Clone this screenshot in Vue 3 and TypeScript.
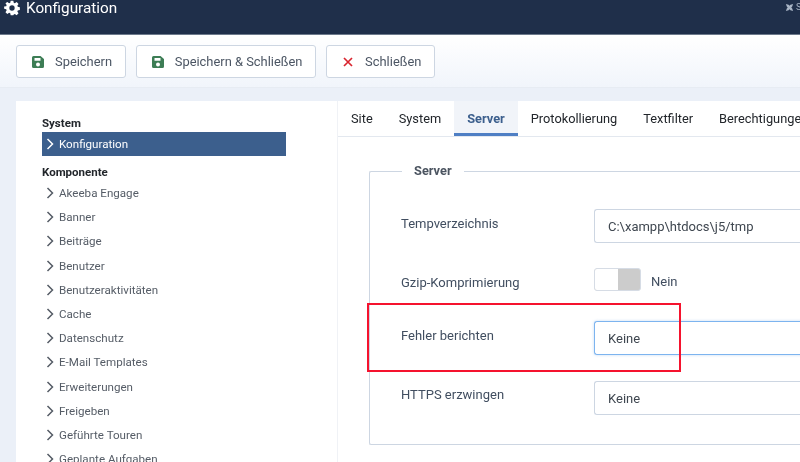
<script setup lang="ts">
const items: string[] = [
  'Akeeba Engage', 'Banner', 'Beiträge', 'Benutzer', 'Benutzeraktivitäten', 'Cache',
  'Datenschutz', 'E-Mail Templates', 'Erweiterungen', 'Freigeben', 'Geführte Touren', 'Geplante Aufgaben',
]
const tabs: string[] = ['Site', 'System', 'Server', 'Protokollierung', 'Textfilter', 'Berechtigungen']
</script>

<template>
  <div class="page">
    <header class="topbar">
      <svg class="gear" viewBox="0 0 24 24" width="16" height="16" aria-hidden="true">
        <path fill="#fff" fill-rule="evenodd" d="M10 1h4l.6 3.100 1.600.7L19 3l2.800 2.900-1.800 2.700.7 1.700 3.100.7v4l-3.100.6-.7 1.700 1.800 2.700-2.800 2.800-2.700-1.800-1.700.7L14 23h-4l-.6-3.100-1.700-.7L5 21l-2.800-2.800L4 15.500l-.7-1.700L.2 13.100v-3.200l3.100-.7L4 7.500 2.200 5 5 2.900l2.700 1.800 1.700-.7zM12 8a4 4 0 1 0 0 8 4 4 0 0 0 0-8z" />
      </svg>
      <span class="title">Konfiguration</span>
      <svg class="joomla" viewBox="0 0 10 10" width="9" height="9" aria-hidden="true">
        <path fill="#a9b5c6" d="M1 1l3 1 1 1 1-1 3-1-1 3-1 1 1 1 1 3-3-1-1-1-1 1-3 1 1-3 1-1-1-1z" />
      </svg>
      <span class="cut">S</span>
    </header>

    <div class="toolbar">
      <button class="btn">
        <svg class="ico" viewBox="0 0 12 12" aria-hidden="true">
          <path fill="#3d7d55" fill-rule="evenodd" d="M1.500 0h7L12 3v7.500A1.500 1.500 0 0 1 10.500 12h-9A1.500 1.500 0 0 1 0 10.500v-9A1.500 1.500 0 0 1 1.500 0zM2.500 2v2.800h6V2zM6 6.500a2 2 0 1 0 0 4 2 2 0 0 0 0-4z" />
        </svg>
        Speichern
      </button>
      <button class="btn">
        <svg class="ico" viewBox="0 0 12 12" aria-hidden="true">
          <path fill="#3d7d55" fill-rule="evenodd" d="M1.500 0h7L12 3v7.500A1.500 1.500 0 0 1 10.500 12h-9A1.500 1.500 0 0 1 0 10.500v-9A1.500 1.500 0 0 1 1.500 0zM2.500 2v2.800h6V2zM6 6.500a2 2 0 1 0 0 4 2 2 0 0 0 0-4z" />
        </svg>
        Speichern &amp; Schließen
      </button>
      <button class="btn">
        <svg class="ico" viewBox="0 0 12 12" aria-hidden="true">
          <path stroke="#d9252f" stroke-width="1.700" d="M2 2l8 8M10 2l-8 8" />
        </svg>
        Schließen
      </button>
    </div>

    <main class="content">
      <aside class="side">
        <h3 class="group first">System</h3>
        <a class="item active">
          <svg class="chev" viewBox="0 0 8 12" aria-hidden="true"><path d="M1.500 1l5 5-5 5" /></svg>
          Konfiguration
        </a>
        <h3 class="group second">Komponente</h3>
        <a v-for="i in items" :key="i" class="item">
          <svg class="chev" viewBox="0 0 8 12" aria-hidden="true"><path d="M1.500 1l5 5-5 5" /></svg>
          {{ i }}
        </a>
      </aside>

      <section class="panel">
        <nav class="tabs">
          <span v-for="t in tabs" :key="t" class="tab" :class="{ on: t === 'Server' }">{{ t }}</span>
        </nav>
        <div class="body">
          <fieldset class="fs">
            <legend>Server</legend>
            <div class="row r1">
              <label>Tempverzeichnis</label>
              <div class="input">C:\xampp\htdocs\j5/tmp</div>
            </div>
            <div class="row r2">
              <label>Gzip-Komprimierung</label>
              <div class="switch">
                <span class="track"><i></i></span>
                <span class="sw-label">Nein</span>
              </div>
            </div>
            <div class="row r3">
              <label>Fehler berichten</label>
              <div class="input focus">Keine</div>
            </div>
            <div class="row r4">
              <label>HTTPS erzwingen</label>
              <div class="input">Keine</div>
            </div>
          </fieldset>
        </div>
      </section>
    </main>

    <div class="mark"></div>
  </div>
</template>

<style>
html, body { margin: 0; background: #eef2f9; }
</style>

<style scoped>
.page {
  position: relative;
  width: 800px;
  height: 462px;
  overflow: hidden;
  background: #ebf0f8;
  font-family: Roboto, "Liberation Sans", sans-serif;
  color: #495057;
  filter: blur(0.35px);
}
.topbar {
  height: 34px;
  background: #1f2f4a;
  border-bottom: 1px solid #6d7a8c;
  display: flex;
  align-items: flex-start;
  color: #fff;
  padding-left: 4px;
}
.title { margin-left: 6px; font-size: 15.3px; line-height: 17px; }
.joomla { margin-left: auto; margin-top: 3px; margin-right: 2px; }
.cut { font-size: 9px; color: #a9b5c6; line-height: 14px; width: 4px; overflow: hidden; }
.toolbar {
  height: 53px;
  box-sizing: border-box;
  padding: 10px 16px 0;
  display: flex;
  gap: 10px;
  align-items: flex-start;
  background: linear-gradient(#fff, #f1f5fb);
  border-bottom: 1px solid #e7ecf3;
}
.btn {
  height: 33px;
  padding: 0 12.700px 0 15px;
  display: flex;
  align-items: center;
  gap: 11px;
  background: #fff;
  border: 1px solid #cdd6e2;
  border-radius: 3px;
  font: 400 12.9px Roboto, sans-serif;
  color: #4b5563;
}
.ico { width: 12px; height: 12px; flex: none; }
.content {
  display: flex;
  margin: 13px 0 0 16px;
  background: #fff;
}
.side {
  width: 322px;
  box-sizing: border-box;
  padding: 14px 51px 0 26px;
  flex: none;
  border-right: 1px solid #f0f2f6;
}
.group {
  margin: 8px 0 0;
  font-size: 11.5px;
  font-weight: 700;
  line-height: 16px;
  color: #22262b;
}
.group.first { margin: 0 0 1px; }
.group.second { margin-bottom: 1px; }
.item {
  display: flex;
  align-items: center;
  height: 24.2px;
  padding-left: 3.500px;
  font-size: 11.6px;
  color: #555c66;
  gap: 5.500px;
}
.item.active { background: #3c5f8d; color: #fff; height: 24px; }
.chev { width: 8px; height: 12px; flex: none; fill: none; stroke: currentColor; stroke-width: 1.5; }
.panel { flex: 1; min-width: 0; }
.tabs {
  display: flex;
  height: 36px;
  box-sizing: border-box;
  border-bottom: 1px solid #e3e8ef;
  white-space: nowrap;
}
.tab {
  padding: 0 13px;
  line-height: 35px;
  font-size: 12.8px;
  color: #22262b;
  height: 35px;
  box-sizing: border-box;
}
.tab.on {
  background: #f1f4f9;
  border-bottom: 3px solid #4f7fc4;
  color: #3c5f8d;
  font-weight: 700;
}
.body { padding: 27px 0 0 31px; }
.fs {
  margin: 0;
  padding: 0;
  width: 500px;
  box-sizing: border-box;
  height: 281px;
  border: 1px solid #cdd6e2;
  border-right: 0;
  border-radius: 2px;
}
legend {
  margin-left: 32px;
  padding: 0 12px;
  font-size: 12.8px;
  font-weight: 700;
  color: #4c5561;
  line-height: 14px;
}
.row {
  display: flex;
  align-items: flex-start;
  padding-left: 31px;
}
.row label {
  width: 193px;
  flex: none;
  font-size: 13px;
  color: #414e60;
  line-height: 16px;
}
.r1 { margin-top: 31px; }
.r1 label { margin-top: 7px; }
.r2 { margin-top: 25px; }
.r2 label { margin-top: 7px; }
.r3 { margin-top: 30px; }
.r3 label { margin-top: 7px; }
.r4 { margin-top: 26px; }
.r4 label { margin-top: 6px; }
.input {
  flex: 1;
  height: 34px;
  box-sizing: border-box;
  padding: 0 13px;
  border: 1px solid #cdd6e2;
  border-right: 0;
  border-radius: 3px 0 0 3px;
  font-size: 13px;
  line-height: 34px;
  color: #3f4750;
}
.input.focus {
  border-color: #7db4ef;
  box-shadow: 0 0 3px rgba(120, 170, 230, 0.45);
}
.switch { display: flex; align-items: center; gap: 10px; }
.track {
  display: block;
  width: 47px;
  height: 23px;
  box-sizing: border-box;
  border: 1px solid #d6dce5;
  border-radius: 3px;
  background: #cccccc;
  overflow: hidden;
}
.track i { display: block; width: 23px; height: 100%; background: #fff; }
.sw-label { font-size: 13px; color: #414e60; padding-top: 3px; }
.mark {
  position: absolute;
  left: 367px;
  top: 303px;
  width: 314px;
  height: 69px;
  box-sizing: border-box;
  border: 2.500px solid #f5132e;
}
</style>
